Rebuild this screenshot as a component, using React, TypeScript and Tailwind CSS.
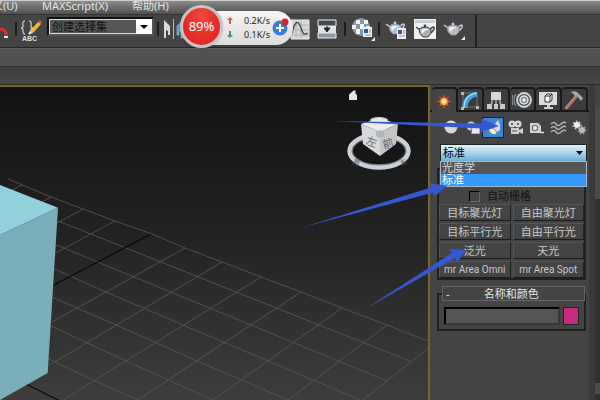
import React from "react";

const LIGHTS = ["目标聚光灯", "自由聚光灯", "目标平行光", "自由平行光", "泛光", "天光"];
const MR_LIGHTS = ["mr Area Omni", "mr Area Spot"];

const GRID_LINES = [
  "8,179 51,197 83,209 115,221 152,234 185,248 222,262 261,277 301,292 342,308 387,325 435,344",
  "387,325 288,400",
  "342,308 213,400",
  "301,292 138,400",
  "261,277 63,400",
  "222,262 48,366",
  "185,248 50,323",
  "115,221 50,256",
  "83,209 50,227",
  "51,197 38,204",
  "22,185 10,191",
  "435,343 363,400",
  "58,221 126,248 236,292 319,325 410,361",
  "54,244 134,277 251,325 387,381",
  "54,269 106,292 183,325 268,361 360,400",
  "52,297 116,325 197,361 288,400",
  "51,326 126,361 213,400",
  "49,359 95,381 138,400",
];

function Icon({ w = 22, h = 22, children }: { w?: number; h?: number; children: React.ReactNode }) {
  return (
    <svg width={w} height={h} viewBox={`0 0 ${w} ${h}`} className="shrink-0" aria-hidden="true">
      {children}
    </svg>
  );
}

function Teapot({ dark = false }: { dark?: boolean }) {
  const line = dark ? "#3d4246" : "#c9ced2";
  return (
    <g>
      <path d="M5 9 L1 6 M15 8 q5 -4 4 0 q-1 3 -4 4" fill="none" stroke={line} strokeWidth="1.5" />
      <path d="M4 8 Q10 4 16 8 Q17 13 13 16 H8 Q4 13 4 8Z" fill={dark ? "#aab0b4" : "#b9bfc4"} stroke={dark ? "#3d4246" : "#8b9196"} strokeWidth="1" />
      <path d="M6 9 Q9 7 14 8 Q10 9 7 13Z" fill="#eceef0" />
      <circle cx="10" cy="5" r="1.4" fill={line} />
    </g>
  );
}

function Separator() {
  return <span className="block h-[14px] w-[2px] shrink-0 bg-[#1e1e1e]" />;
}

function MenuBar() {
  return (
    <nav className="flex h-[14px] items-start border-t border-[#d0d0d0] bg-linear-to-b from-[#8a8a8a] to-[#505050] text-[11px] leading-[9px] text-[#e4e4e4]">
      <a href="#customize" className="-ml-2 w-[50px] whitespace-nowrap">义(U)</a>
      <a href="#maxscript" className="w-[90px]">MAXScript(X)</a>
      <a href="#help">帮助(H)</a>
    </nav>
  );
}

function Toolbar() {
  return (
    <div className="flex h-[34px] border-t border-b border-t-[#333] border-b-[#262626]">
      <div className="flex w-[477px] shrink-0 items-center border-r-2 border-[#222] pb-1">
        <button aria-label="Snap" className="w-[15px] pt-2">
          <Icon w={15} h={14}>
            <path d="M-3 12 V7 Q2 -1 6 7 V12" fill="none" stroke="#d32f38" strokeWidth="3" />
            <path d="M4 11h4" stroke="#eee" strokeWidth="2" />
          </Icon>
        </button>
        <Separator />
        <button aria-label="Edit named selection sets" className="ml-[3px] w-[24px] pt-[2px]">
          <svg width="24" height="24" viewBox="0 0 24 24" aria-hidden="true">
            <path d="M5 3 q-3 0 -2 5 q0 2 -2 2 q2 0 2 3 q0 3 2 3 M9 3 q3 0 2 5 q0 2 2 2 q-2 0 -2 3 q0 3 -2 3" fill="none" stroke="#c3c3c3" strokeWidth="1.3" />
            <path d="M10 13 L18 4 L21 6 L13 15Z" fill="#f0bb3c" />
            <path d="M10 13 L13 15 L8 16Z" fill="#fff4d0" />
            <path d="M18 4l2-2 2 2-1 2z" fill="#c65b3f" />
            <text x="2" y="23" fontSize="7" fontWeight="bold" fill="#e0e0e0" fontFamily="Liberation Sans">ABC</text>
          </svg>
        </button>
        <label className="relative ml-[3px] mb-[5px] block h-[19px] w-[107px] border-2 border-[#111] border-b-[#555] border-r-[#555]">
          <select aria-label="创建选择集" className="block h-full w-full appearance-none border border-[#ddd] bg-[#555] px-0.5 text-[11px] leading-[13px] text-[#111]">
            <option>创建选择集</option>
          </select>
          <span className="pointer-events-none absolute top-0 right-0 flex h-full w-4 items-center justify-center bg-white">
            <svg width="8" height="4" viewBox="0 0 8 4"><path d="M0 0h8L4 4z" fill="#000" /></svg>
          </span>
        </label>
        <span className="ml-[3px]"><Separator /></span>
        <button aria-label="Mirror" className="ml-[5px]">
          <Icon w={20} h={22}>
            <path d="M0 2 L6 8 V17 H4 V13 L2 12 V20 H0Z" fill="#d5dade" />
            <path d="M9.500 1v20" stroke="#bbb" />
            <path d="M20 2 L13 8 V17 H15 V13 L17 12 V20 H20Z" fill="#4a9cdb" stroke="#a5d0ee" strokeWidth=".6" />
          </Icon>
        </button>
        <button aria-label="Curve editor" className="ml-[106px]">
          <Icon w={21} h={21}>
            <path d="M1 1h18v19H1z" fill="#d4d7d9" stroke="#eee" />
            <path d="M1 6h18M1 11h18M1 16h18M6 1v18M11 1v18" stroke="#aeb3b6" />
            <path d="M2 14 C5 2 8 0 11 9 S15 15 18 14" fill="none" stroke="#444" strokeWidth="1.3" />
          </Icon>
        </button>
        <button aria-label="Schematic view" className="ml-[6px]">
          <Icon w={21} h={21}>
            <path d="M1 1h18v6H1z" fill="#454a4e" stroke="#eee" />
            <path d="M1 14h18v5H1z" fill="#8c979f" stroke="#eee" />
            <path d="M1 7h18v7H1z" fill="#dfe2e4" />
            <path d="M10 7v5M7 9h6l-3 4z" fill="#222" stroke="#222" />
          </Icon>
        </button>
        <span className="ml-[6px]"><Separator /></span>
        <button aria-label="Material editor" className="ml-[5px]">
          <Icon w={25} h={24}>
            <circle cx="10" cy="10" r="9" fill="#8b979e" />
            <path d="M5 3h4v4H5zM13 3h4v4h-4zM1 8h4v4H1zM9 7h4v5H9zM5 12h4v5H5zM15 9h4v4h-4z" fill="#eef3f5" />
            <path d="M12 10h9v10h-9z" fill="#f0f2f4" />
            <path d="M13 12h4v4h-4z" fill="#215fa8" />
            <path d="M18 13h2M18 15h2M14 18h6" stroke="#888" />
            <path d="M24 20v4h-4z" fill="#eee" />
          </Icon>
        </button>
        <span className="ml-[2px]"><Separator /></span>
        <button aria-label="Render setup" className="ml-[5px]">
          <Icon w={23} h={22}>
            <Teapot />
            <path d="M12 10h9v11h-9z" fill="#f0f2f4" />
            <path d="M13 12h4v4h-4z" fill="#215fa8" />
            <path d="M18 13h2M18 15h2M14 18h6" stroke="#888" />
          </Icon>
        </button>
        <button aria-label="Rendered frame window" className="ml-[6px]">
          <Icon w={22} h={22}>
            <path d="M0 1h22v20H0z" fill="#eef0f1" />
            <path d="M1 2h20v3H1z" fill="#c9cdd0" />
            <g transform="translate(1 3)"><Teapot dark /></g>
          </Icon>
        </button>
        <button aria-label="Render" className="ml-[7px]">
          <Icon w={23} h={24}>
            <g transform="translate(0 2)"><Teapot /></g>
            <path d="M22 19v4h-4z" fill="#eee" />
          </Icon>
        </button>
      </div>
    </div>
  );
}

function SpeedWidget() {
  return (
    <div className="absolute top-[5px] left-[180px] flex items-center">
      <div className="z-10 flex size-[43px] items-center justify-center rounded-full border-[3px] border-[#c4c4c4] bg-radial-[at_50%_25%] from-[#f0483c] to-[#dc1c1c] text-[13px] text-white shadow">
        89%
      </div>
      <div className="-ml-5 mt-[3px] flex h-[34px] w-[90px] items-center rounded-r-full bg-linear-to-b from-[#f5f5f5] to-[#dcdcdc] pl-6 shadow">
        <svg width="6" height="22" viewBox="0 0 6 22" aria-hidden="true">
          <path d="M3 0L6 3H4V7H2V3H0z" fill="#e05548" />
          <path d="M3 21L6 18H4V14H2V18H0z" fill="#2da35b" />
        </svg>
        <div className="ml-[11px] w-7 text-[9px] leading-[14px] whitespace-nowrap text-[#1d1d1d]">
          <div>0.2K/s</div>
          <div>0.1K/s</div>
        </div>
      </div>
      <button aria-label="Boost" className="-ml-[21px]">
        <Icon w={17} h={18}>
          <circle cx="8" cy="10" r="7.500" fill="#377fd6" />
          <path d="M8 6v8M4 10h8" stroke="#fff" strokeWidth="2" />
          <circle cx="13" cy="4" r="3.500" fill="#d9232a" />
        </Icon>
      </button>
    </div>
  );
}

function Viewport() {
  return (
    <main className="relative min-w-0 flex-1 overflow-hidden border-t-2 border-r-2 border-[#7c6524] bg-linear-to-b from-[#121212] via-[#242424] to-[#3d3d3d]">
      <svg width="428" height="313" viewBox="0 87 428 313" className="absolute top-0 left-0" role="img" aria-label="Perspective view">
        <g fill="none" stroke="#585858" strokeWidth=".8">
          {GRID_LINES.map((points) => <polyline key={points} points={points} />)}
        </g>
        <path d="M151 234L50 287M26 384L60 401" stroke="#080808" strokeWidth="1.2" />
        <path d="M0 185L58 207.700L0 235z" fill="#92d1dc" />
        <path d="M0 235L58 207.700L47.700 373L0 400z" fill="#7aaeb9" />
        <path d="M349 94.500l3.500-3 1-1h2v3l1.500 1.500v5h-8z" fill="#dfe6eb" />
        <ellipse cx="379" cy="151" rx="29" ry="16" fill="#161616" stroke="#7f858c" strokeWidth="5.500" />
        <ellipse cx="379" cy="151" rx="29.500" ry="16.500" fill="none" stroke="#ccd1d8" strokeWidth="4" />
        <ellipse cx="379" cy="120" rx="9" ry="3" fill="#d5d7d9" />
        <path d="M361 124L379.500 118L398 124L380 132z" fill="#eceded" />
        <path d="M361 124L380 132V156L363 144z" fill="#d7d8da" />
        <path d="M380 132L398 124L396 144L380 156z" fill="#c4c5c8" />
        <path d="M376 132l4-2 4 2v4l-4 2-4-2z" fill="#b4b6ba" />
        <g fill="#63666b" fontFamily="Noto Sans CJK SC" fontSize="11">
          <text transform="translate(365 144) rotate(18)">左</text>
          <text transform="translate(384 149) rotate(-18)">前</text>
        </g>
        <g fill="#555b63" fontFamily="Noto Sans CJK SC" fontSize="7">
          <text x="353" y="165" transform="rotate(24 356 162)">南</text>
          <text x="400" y="165" transform="rotate(-24 403 162)">东</text>
        </g>
      </svg>
    </main>
  );
}

const TABS: { name: string; art: React.ReactNode }[] = [
  {
    name: "Create",
    art: (
      <>
        <path d="M10 3l1.500 4L15 5.500 13.500 9l4.500 1.500-4.500 1.500 1.500 3.500-3.500-1.500L10 18l-1.500-4L5 15.500 6.500 12 2 10.500 6.500 9 5 5.500 8.500 7z" fill="#d34f20" />
        <circle cx="10" cy="10.500" r="3.500" fill="#ffb52e" />
        <circle cx="10" cy="10.500" r="2" fill="#fff6c8" />
      </>
    ),
  },
  {
    name: "Modify",
    art: (
      <>
        <path d="M3 3h14v14H3z" fill="none" stroke="#777" />
        <path d="M5 18Q5 6 17 4" fill="none" stroke="#3f9fe0" strokeWidth="5" />
        <path d="M4 18Q4 5 17 3" fill="none" stroke="#bfe4fa" strokeWidth="1.2" />
        <path d="M1 2h3v3H1zM16 16h3v3h-3zM1 17h3v3H1z" fill="#bbb" />
      </>
    ),
  },
  {
    name: "Hierarchy",
    art: (
      <>
        <path d="M5 2h10v8H5z" fill="#d5d8da" />
        <path d="M10 10v8M6 10v3L4 15M14 10v3l2 2" fill="none" stroke="#bbb" strokeWidth="1.3" />
        <path d="M1 14h5v5H1zM8 14h4v5H8zM14 14h5v5h-5z" fill="#c6c9cb" />
      </>
    ),
  },
  {
    name: "Motion",
    art: (
      <>
        <circle cx="12" cy="10" r="7" fill="#4c5154" stroke="#d5d8da" strokeWidth="1.800" />
        <circle cx="12" cy="10" r="4" fill="#8b9195" stroke="#e2e4e6" strokeWidth="1.500" />
        <circle cx="12" cy="10" r="1.500" fill="#fff" />
        <path d="M4 4Q0 10 4 16M1 5Q-1 10 1 15" fill="none" stroke="#8c9194" strokeWidth="1.200" />
      </>
    ),
  },
  {
    name: "Display",
    art: (
      <>
        <path d="M1 2h18v13H1z" fill="#d9dde0" />
        <path d="M7 6l2-2h5v6l-2 2H7zM7 6h5v6M12 6l2-2" fill="#fff" stroke="#333" />
        <path d="M9 15h3v2h3v2H6v-2h3z" fill="#ccd0d3" />
      </>
    ),
  },
  {
    name: "Utilities",
    art: (
      <>
        <path d="M2 19L13 6" stroke="#bd6f60" strokeWidth="2.600" />
        <path d="M1 18L12 5" stroke="#e4c0b5" strokeWidth=".8" />
        <path d="M7 2Q12 0 15 4l4 4-2 3-3-4-3-1Q10 4 7 2z" fill="#a3acb2" />
      </>
    ),
  },
];

const CATEGORIES: { name: string; art: React.ReactNode }[] = [
  { name: "Geometry", art: <circle cx="9" cy="9" r="6.500" fill="#d8d8d8" /> },
  {
    name: "Shapes",
    art: <><circle cx="7" cy="8" r="4.500" fill="#cfd2d4" /><path d="M8 9h8v7H7z" fill="#e7e9ea" stroke="#555" strokeWidth=".7" /></>,
  },
  {
    name: "Lights",
    art: <><path d="M7 10L13 2l2 3v7l-4 3z" fill="#d7dde0" /><path d="M4 11q5-2 7 5-6 1-7-5z" fill="#fff1b8" /><path d="M13 2l2 4M8 10l4 4" stroke="#8a9094" /></>,
  },
  {
    name: "Cameras",
    art: (
      <>
        <circle cx="5" cy="6" r="3.500" fill="#d6d8d9" /><circle cx="11" cy="6" r="3.500" fill="#d6d8d9" />
        <circle cx="5" cy="6" r="1" fill="#333" /><circle cx="11" cy="6" r="1" fill="#333" />
        <path d="M4 10h8v6H4zM12 12l4-2v6l-4-2z" fill="#cdd0d1" /><path d="M5 13h5" stroke="#555" />
      </>
    ),
  },
  {
    name: "Helpers",
    art: <><path d="M2 5h8l3 3v7H2z" fill="#cfd3d5" /><circle cx="7" cy="10" r="3.300" fill="#777" /><circle cx="7" cy="10" r="2" fill="#e7e9ea" /><path d="M12 14.500h4" stroke="#ddd" strokeWidth="1.500" /></>,
  },
  {
    name: "Space warps",
    art: <path d="M1 6q3-3 5 0t5 0 5-1M1 10q3-3 5 0t5 0 5-1M1 14q3-3 5 0t5 0 5-1" fill="none" stroke="#a9b4b8" strokeWidth="1.500" />,
  },
  {
    name: "Systems",
    art: (
      <>
        <circle cx="6" cy="7" r="3.500" fill="none" stroke="#ccc" strokeWidth="2" strokeDasharray="1.500 1.500" /><circle cx="6" cy="7" r="3" fill="#eee" />
        <circle cx="11" cy="12" r="3.500" fill="none" stroke="#999" strokeWidth="2" strokeDasharray="1.500 1.500" /><circle cx="11" cy="12" r="3" fill="#bbb" />
      </>
    ),
  },
];

function LightButton({ name, face }: { name: string; face: string }) {
  return (
    <button className={`h-[17px] border border-t-[#555] border-l-[#555] border-r-[#222] border-b-[#1c1c1c] leading-[15px] whitespace-nowrap text-[#c8c8c8] ${face}`}>
      {name}
    </button>
  );
}

function CommandPanel() {
  return (
    <aside className="w-[165px] shrink-0 border-r-[6px] border-[#3a3a3a] bg-[#444]">
      <div className="flex border-b-2 border-[#191919] pt-[2px] pl-[2px]">
        {TABS.map((tab, i) => (
          <button
            key={tab.name}
            aria-label={tab.name}
            className={
              i === 0
                ? "-mb-[2px] flex h-[25px] w-[26px] items-center justify-center rounded-t-sm border-t-2 border-r-2 border-[#191919] bg-[#444]"
                : "flex h-[23px] w-[26px] items-center justify-center rounded-t-sm border-t-2 border-r-2 border-[#191919] bg-[#3c3c3c]"
            }
          >
            <Icon w={20} h={20}>{tab.art}</Icon>
          </button>
        ))}
      </div>
      <div className="mt-[6px] flex gap-0.5 pl-[10px]">
        {CATEGORIES.map((item) => (
          <button
            key={item.name}
            aria-label={item.name}
            className={item.name === "Lights" ? "h-[19px] w-5 bg-[#3a86d8] pl-0.5 outline outline-[#222]" : "h-[19px] w-5 pl-0.5"}
          >
            <Icon w={17} h={19}>{item.art}</Icon>
          </button>
        ))}
      </div>
      <div className="relative mt-[7px] ml-[10px] w-[147px]">
        <select aria-label="Light type" defaultValue="标准" className="block h-[18px] w-full appearance-none border border-[#222] bg-linear-to-b from-[#e2f3fb] to-[#6bb0d5] px-0.5 text-[11px] leading-4 text-black">
          <option>光度学</option>
          <option>标准</option>
        </select>
        <svg width="7" height="4" viewBox="0 0 7 4" className="pointer-events-none absolute top-[7px] right-1"><path d="M0 0h7L3.500 4z" fill="#111" /></svg>
        <ul role="listbox" aria-label="Light types" className="absolute top-[17px] left-0 z-10 w-full border border-[#aeb3c6] bg-[#555] text-[11px] leading-3 text-[#d8d8d8]">
          <li role="option" aria-selected="false" className="px-px">光度学</li>
          <li role="option" aria-selected="true" className="bg-[#3399ff] px-px text-white">标准</li>
        </ul>
      </div>
      <section className="mt-[6px] ml-[7px] w-[149px] border-2 border-[#202020] pt-[18px]">
        <label className="flex h-4 items-center gap-[7px] pl-[30px] text-[11px] leading-4 text-[#111]">
          <input type="checkbox" className="size-[11px] appearance-none border border-[#666] border-t-black border-l-black bg-[#444]" />
          自动栅格
        </label>
        <div className="grid grid-cols-2 gap-x-0.5 gap-y-[2px]">
          {LIGHTS.map((name) => <LightButton key={name} name={name} face="text-[11px]" />)}
          {MR_LIGHTS.map((name) => <LightButton key={name} name={name} face="font-[Roboto,sans-serif] text-[10px]" />)}
        </div>
      </section>
      <section className="mt-[13px] ml-[7px] w-[149px] border-2 border-[#202020] px-[5px] pb-1">
        <button className="-mx-[2px] -mt-[9px] flex h-[15px] w-[143px] items-center border border-[#666] bg-[#444] pr-[11px] pl-[3px] text-[11px] leading-[13px] text-[#e8e8e8]">
          <span>-</span>
          <span className="flex-1 text-center">名称和颜色</span>
        </button>
        <div className="mt-[6px] flex gap-[3px]">
          <input aria-label="名称" className="h-[18px] min-w-0 flex-1 border-2 border-t-black border-l-black border-r-[#383838] border-b-[#383838] bg-[#555] text-[11px] text-white" />
          <button aria-label="颜色" className="h-[18px] w-4 border border-[#222] bg-[#c52c82]" />
        </div>
      </section>
    </aside>
  );
}

function Arrows() {
  return (
    <svg width="600" height="400" viewBox="0 0 600 400" className="pointer-events-none absolute top-0 right-0 z-20" aria-hidden="true">
      <g fill="#3558d2">
        <path d="M332 121L482 123.500L481 118.500L499 126L480 132.500L481 128.500z" />
        <path d="M302 227.500L431 187.500L430 183L447 186L435 196L433.500 192.500z" />
        <path d="M365 309L452 253L449 249L466 250L457 263L455 258z" />
      </g>
    </svg>
  );
}

export default function App() {
  return (
    <div className="relative flex min-h-screen flex-col overflow-hidden bg-[#444] font-['Noto_Sans','Noto_Sans_CJK_SC',sans-serif]">
      <MenuBar />
      <Toolbar />
      <div className="h-[19px] border-y border-t-[#5e5e5e] border-b-[#333] bg-[#525252]" />
      <div className="h-[18px] border-b border-[#2b2b2b] bg-linear-to-b from-[#3d3d3d] to-[#474747]" />
      <div className="flex flex-1">
        <Viewport />
        <CommandPanel />
        <div className="flex w-[5px] shrink-0 flex-col bg-[#2f2f2f]">
          <div className="h-[22px] bg-[#444]" />
          <div className="h-[92px] bg-[#4c4c4c]" />
          <div className="mt-auto mb-1.5 h-[11px] bg-[#4c4c4c]" />
        </div>
      </div>
      <SpeedWidget />
      <Arrows />
    </div>
  );
}
